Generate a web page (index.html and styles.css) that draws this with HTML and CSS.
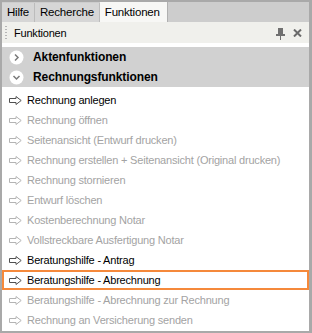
FILE: index.html
```html
<!DOCTYPE html>
<html lang="de">
<head>
    <meta charset="UTF-8">
    <title>Funktionen</title>
    <link rel="stylesheet" href="styles.css">
</head>
<body>
    <div class="window">
        <div class="tabs">
            <div class="tab">Hilfe</div>
            <div class="tab">Recherche</div>
            <div class="tab active">Funktionen</div>
        </div>

        <div class="panel-header">
            <span class="grip"></span>
            <span class="panel-title">Funktionen</span>
            <svg class="pin" width="9" height="12" viewBox="0 0 9 12">
                <rect x="2" y="0" width="5" height="6" fill="#707070"/>
                <rect x="0" y="6" width="9" height="2" fill="#707070"/>
                <rect x="4" y="8" width="1" height="4" fill="#707070"/>
            </svg>
            <svg class="close" width="9" height="8" viewBox="0 0 9 8">
                <path d="M1 0.5 L8 7.5 M8 0.5 L1 7.5" stroke="#6a6a6a" stroke-width="2"/>
            </svg>
        </div>

        <div class="section">
            <svg class="toggle" width="15" height="15" viewBox="0 0 15 15">
                <circle cx="7.5" cy="7.5" r="7" fill="#fff"/>
                <path d="M6 4.5 L9 7.5 L6 10.5" fill="none" stroke="#7a7a7a" stroke-width="1.5"/>
            </svg>
            <span>Aktenfunktionen</span>
        </div>
        <div class="section">
            <svg class="toggle" width="15" height="15" viewBox="0 0 15 15">
                <circle cx="7.5" cy="7.5" r="7" fill="#fff"/>
                <path d="M4.5 6 L7.5 9 L10.5 6" fill="none" stroke="#7a7a7a" stroke-width="1.5"/>
            </svg>
            <span>Rechnungsfunktionen</span>
        </div>

        <ul class="items">
            <li class="item enabled"><svg class="arrow" width="13" height="9" viewBox="0 0 13 9"><path d="M0.5 2.5 H7 V0.5 L12.2 4.5 L7 8.5 V6.5 H0.5 Z"/></svg>Rechnung anlegen</li>
            <li class="item"><svg class="arrow" width="13" height="9" viewBox="0 0 13 9"><path d="M0.5 2.5 H7 V0.5 L12.2 4.5 L7 8.5 V6.5 H0.5 Z"/></svg>Rechnung öffnen</li>
            <li class="item"><svg class="arrow" width="13" height="9" viewBox="0 0 13 9"><path d="M0.5 2.5 H7 V0.5 L12.2 4.5 L7 8.5 V6.5 H0.5 Z"/></svg>Seitenansicht (Entwurf drucken)</li>
            <li class="item"><svg class="arrow" width="13" height="9" viewBox="0 0 13 9"><path d="M0.5 2.5 H7 V0.5 L12.2 4.5 L7 8.5 V6.5 H0.5 Z"/></svg>Rechnung erstellen + Seitenansicht (Original drucken)</li>
            <li class="item"><svg class="arrow" width="13" height="9" viewBox="0 0 13 9"><path d="M0.5 2.5 H7 V0.5 L12.2 4.5 L7 8.5 V6.5 H0.5 Z"/></svg>Rechnung stornieren</li>
            <li class="item"><svg class="arrow" width="13" height="9" viewBox="0 0 13 9"><path d="M0.5 2.5 H7 V0.5 L12.2 4.5 L7 8.5 V6.5 H0.5 Z"/></svg>Entwurf löschen</li>
            <li class="item"><svg class="arrow" width="13" height="9" viewBox="0 0 13 9"><path d="M0.5 2.5 H7 V0.5 L12.2 4.5 L7 8.5 V6.5 H0.5 Z"/></svg>Kostenberechnung Notar</li>
            <li class="item"><svg class="arrow" width="13" height="9" viewBox="0 0 13 9"><path d="M0.5 2.5 H7 V0.5 L12.2 4.5 L7 8.5 V6.5 H0.5 Z"/></svg>Vollstreckbare Ausfertigung Notar</li>
            <li class="item enabled"><svg class="arrow" width="13" height="9" viewBox="0 0 13 9"><path d="M0.5 2.5 H7 V0.5 L12.2 4.5 L7 8.5 V6.5 H0.5 Z"/></svg>Beratungshilfe - Antrag</li>
            <li class="item enabled selected"><svg class="arrow" width="13" height="9" viewBox="0 0 13 9"><path d="M0.5 2.5 H7 V0.5 L12.2 4.5 L7 8.5 V6.5 H0.5 Z"/></svg>Beratungshilfe - Abrechnung</li>
            <li class="item"><svg class="arrow" width="13" height="9" viewBox="0 0 13 9"><path d="M0.5 2.5 H7 V0.5 L12.2 4.5 L7 8.5 V6.5 H0.5 Z"/></svg>Beratungshilfe - Abrechnung zur Rechnung</li>
            <li class="item"><svg class="arrow" width="13" height="9" viewBox="0 0 13 9"><path d="M0.5 2.5 H7 V0.5 L12.2 4.5 L7 8.5 V6.5 H0.5 Z"/></svg>Rechnung an Versicherung senden</li>
        </ul>
    </div>
</body>
</html>
```

FILE: styles.css
```css
html, body {
    margin: 0;
    padding: 0;
}
body {
    font-family: "Liberation Sans", Arial, sans-serif;
    font-size: 11px;
    letter-spacing: -0.2px;
    color: #000;
    background: #fff;
}
.window {
    width: 312px;
    height: 333px;
    box-sizing: border-box;
    border: 2px solid #a9a9a9;
    border-right-width: 3px;
    background: #fff;
    overflow: hidden;
    display: flex;
    flex-direction: column;
}
.tabs {
    display: flex;
    align-items: flex-end;
    height: 20px;
    background: #cdcdcd;
    flex-shrink: 0;
}
.tab {
    height: 19px;
    line-height: 19px;
    padding: 0 5px 0 5px;
    background: #d6d6d6;
    border-right: 1px solid #bcbcbc;
    font-size: 11.5px;
}
.tab.active {
    height: 20px;
    line-height: 20px;
    padding-right: 7px;
    background: #f7f7f5;
    border-right: 1px solid #b0b0b0;
}
.panel-header {
    display: flex;
    align-items: center;
    height: 21px;
    background: #f0f0ec;
    border-bottom: 4px solid #fff;
    flex-shrink: 0;
}
.grip {
    width: 2px;
    height: 13px;
    margin: 0 7px 0 3px;
    background: repeating-linear-gradient(#b5b5b5 0 1px, transparent 1px 3px);
}
.panel-title {
    flex: 1;
    font-size: 11px;
}
.pin {
    margin-right: 8px;
    margin-top: 2px;
}
.close {
    margin-right: 7px;
}
.section {
    display: flex;
    align-items: center;
    height: 20px;
    background: #d1d1d1;
    font-weight: bold;
    font-size: 12px;
    letter-spacing: -0.1px;
    flex-shrink: 0;
}
.toggle {
    margin: 0 9px 0 7px;
}
.items {
    list-style: none;
    margin: 0;
    padding: 3px 0 0;
}
.item {
    display: flex;
    align-items: center;
    height: 20px;
    padding-left: 7px;
    color: #a3a3a3;
    box-sizing: border-box;
    white-space: nowrap;
}
.arrow {
    margin-right: 5px;
    flex-shrink: 0;
}
.arrow path {
    fill: #fff;
    stroke: #b4b4b4;
    stroke-width: 1;
}
.item.enabled {
    color: #000;
}
.item.enabled .arrow path {
    stroke: #505050;
}
.item.selected {
    border: 2px solid #f5893b;
    padding-left: 5px;
}
```
